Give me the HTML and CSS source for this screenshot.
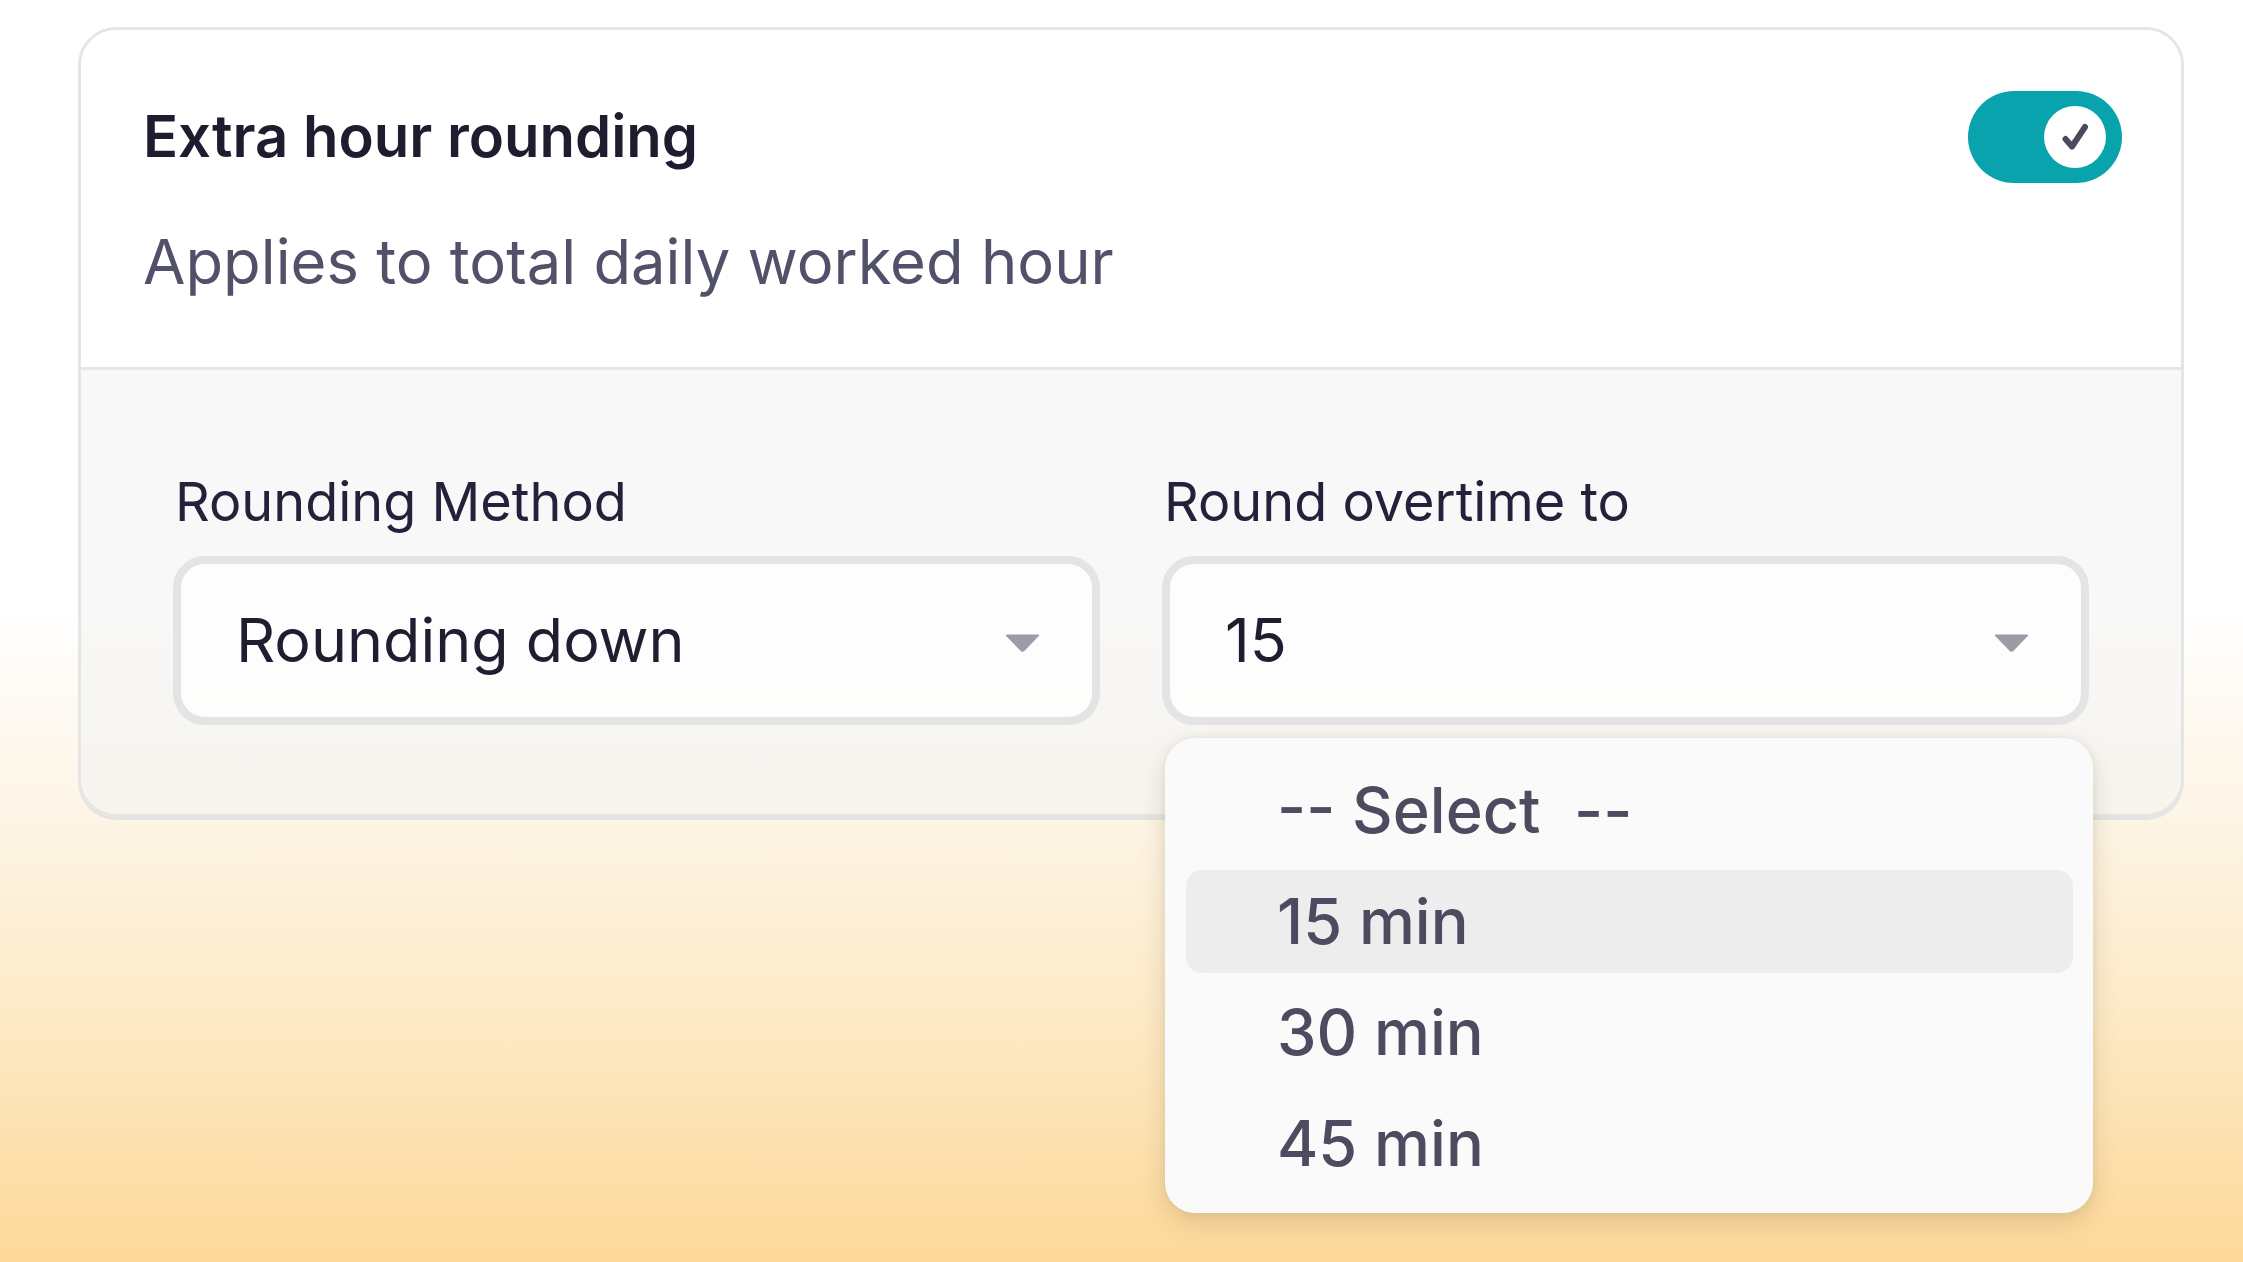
FILE: index.html
```html
<!DOCTYPE html>
<html lang="en">
<head>
  <meta charset="UTF-8" />
  <meta name="viewport" content="width=device-width, initial-scale=1.0"/>
  <title>Extra hour rounding</title>
  <link rel="stylesheet" href="styles.css">
</head>
<body>

  <section class="card">
    <header class="card-head">
      <div class="head-row">
        <h2 class="title">Extra hour rounding</h2>
        <span class="toggle">
          <span class="knob">
            <svg viewBox="0 0 62 62" width="62" height="62">
              <polyline points="21.5,33 28,40.5 41,21" fill="none" stroke="#4a4a5e" stroke-width="6" stroke-linecap="round" stroke-linejoin="round"/>
            </svg>
          </span>
        </span>
      </div>
      <p class="subtitle">Applies to total daily worked hour</p>
    </header>

    <div class="card-body">
      <div class="field">
        <label class="field-label">Rounding Method</label>
        <div class="select">
          <span>Rounding down</span>
          <svg class="caret" viewBox="0 0 37 21" width="37" height="21">
            <path d="M3 2.5 H34 Q36.2 2.5 34.6 4.3 L20.3 19 Q18.5 20.7 16.7 19 L2.4 4.3 Q0.8 2.5 3 2.5 Z" fill="#9c9ca7"/>
          </svg>
        </div>
      </div>

      <div class="field field-open">
        <label class="field-label">Round overtime to</label>
        <div class="select">
          <span>15</span>
          <svg class="caret" viewBox="0 0 37 21" width="37" height="21">
            <path d="M3 2.5 H34 Q36.2 2.5 34.6 4.3 L20.3 19 Q18.5 20.7 16.7 19 L2.4 4.3 Q0.8 2.5 3 2.5 Z" fill="#9c9ca7"/>
          </svg>
        </div>

        <ul class="menu">
          <li class="menu-item">-- Select &nbsp;--</li>
          <li class="menu-item active">15 min</li>
          <li class="menu-item">30 min</li>
          <li class="menu-item">45 min</li>
        </ul>
      </div>
    </div>
  </section>

</body>
</html>
```

FILE: styles.css
```css
body {
  margin: 0;
  height: 1262px;
  overflow: hidden;
  font-family: Inter, "Noto Sans", sans-serif;
  background: linear-gradient(
    180deg,
    #ffffff 0%,
    #ffffff 48%,
    #fdf4e3 66%,
    #fde7bf 84%,
    #fdd898 100%
  );
}

.card {
  width: 2100px;
  margin: 27px 0 0 78px;
  border: 3px solid #e5e5e5;
  border-radius: 38px;
  box-shadow: 0 3px 0 #e4e4e4;
  background: transparent;
}

.card-head {
  padding: 61px 59px 68px 62px;
  background: #fff;
  border-bottom: 3px solid #e6e6e6;
  border-radius: 35px 35px 0 0;
}

.head-row {
  display: flex;
  justify-content: space-between;
  align-items: center;
}

.title {
  margin: 0;
  font-size: 58px;
  line-height: 1.2;
  font-weight: 600;
  color: #1e1c2e;
}

.toggle {
  position: relative;
  width: 154px;
  height: 92px;
  border-radius: 46px;
  background: #08a3ad;
}

.knob {
  position: absolute;
  top: 15px;
  right: 16px;
  width: 62px;
  height: 62px;
  border-radius: 50%;
  background: #fff;
}

.knob svg {
  display: block;
}

.subtitle {
  margin: 42px 0 0;
  font-size: 61.5px;
  line-height: 1.2;
  font-weight: 400;
  color: #51516a;
}

.card-body {
  display: grid;
  grid-template-columns: 1fr 1fr;
  gap: 62px;
  padding: 100px 92px 89px;
  background: rgba(244, 244, 244, 0.6);
  border-radius: 0 0 35px 35px;
}

.field {
  position: relative;
}

.field-label {
  display: block;
  padding-left: 2px;
  font-size: 54px;
  line-height: 1.2;
  color: #24223a;
}

.select {
  box-sizing: border-box;
  height: 169px;
  margin-top: 21px;
  padding: 0 51px 0 55px;
  display: flex;
  justify-content: space-between;
  align-items: center;
  border: 8px solid #e4e4e4;
  border-radius: 32px;
  background: rgba(255, 255, 255, 0.75);
  font-size: 61px;
  color: #1f1d30;
}

.caret {
  display: block;
  margin-top: 4px;
}

.menu {
  position: absolute;
  z-index: 5;
  top: calc(100% + 13px);
  left: 3px;
  width: 928px;
  box-sizing: border-box;
  margin: 0;
  padding: 21px 20px 18px 21px;
  list-style: none;
  display: flex;
  flex-direction: column;
  gap: 8px;
  background: #fafafa;
  border-radius: 30px;
  box-shadow: 0 10px 26px rgba(120, 95, 50, 0.2), 0 0 8px rgba(0, 0, 0, 0.06);
}

.menu-item {
  height: 103px;
  padding-left: 91px;
  display: flex;
  align-items: center;
  border-radius: 16px;
  font-size: 63px;
  font-weight: 500;
  color: #4c4b60;
}

.menu-item.active {
  background: #ededed;
}
```
